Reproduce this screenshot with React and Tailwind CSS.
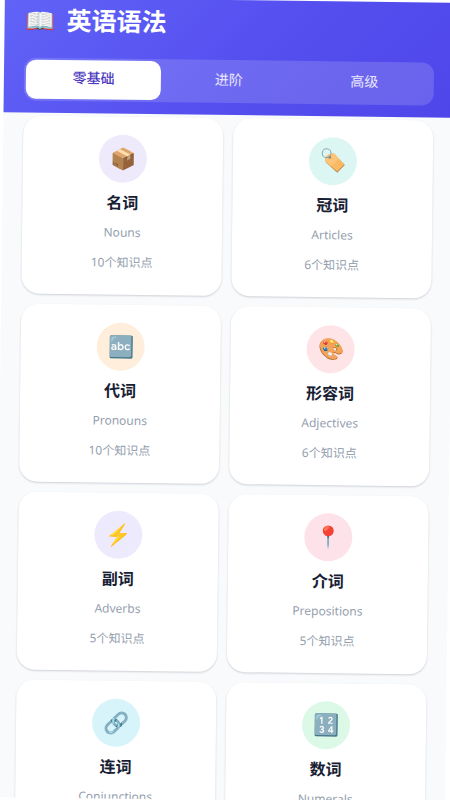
import React, { useState } from 'react';

const levels = ['零基础', '进阶', '高级'];

const TagIcon = () => (
  <svg width="26" height="26" viewBox="0 0 26 26" fill="none" aria-hidden="true">
    <path d="M5.6 10.6 8.8 7.8l5.4-1L25 17.6l-7.6 7.8L5.8 15z" fill="#b98a4e" />
    <path d="M5.4 9.8 8.6 7l5.4-1L24.2 17l-7 7.2L5.2 14z" fill="#fbb963" />
    <path d="M5.4 9.8 8.6 7l5.4-1 5 5.400-8 7.600-5.800-5z" fill="#fdc47a" />
    <circle cx="9.8" cy="10" r="1.5" fill="#94836c" />
    <circle cx="6.6" cy="6" r="4.4" stroke="#86aab5" strokeWidth="1.1" />
  </svg>
);

const topics = [
  { id: 'nouns', title: '名词', name: 'Nouns', count: 10, icon: '📦', color: 'bg-[#eeeafc]' },
  { id: 'articles', title: '冠词', name: 'Articles', count: 6, icon: <TagIcon />, color: 'bg-[#dcf7f3]' },
  { id: 'pronouns', title: '代词', name: 'Pronouns', count: 10, icon: '🔤', color: 'bg-[#feeedb]' },
  { id: 'adjectives', title: '形容词', name: 'Adjectives', count: 6, icon: '🎨', color: 'bg-[#fee4e6]' },
  { id: 'adverbs', title: '副词', name: 'Adverbs', count: 5, icon: '⚡', color: 'bg-[#eeeafe]' },
  { id: 'prepositions', title: '介词', name: 'Prepositions', count: 5, icon: '📍', color: 'bg-[#fde2e9]' },
  { id: 'conjunctions', title: '连词', name: 'Conjunctions', count: 5, icon: '🔗', color: 'bg-[#d8f4fb]' },
  { id: 'numerals', title: '数词', name: 'Numerals', count: 4, icon: '🔢', color: 'bg-[#dcf8e7]' },
];

const TopicCard = ({ topic }) => (
  <button
    type="button"
    className="flex flex-col items-center rounded-[18px] bg-white pt-[18px] pb-[22px] shadow-[0_1px_2px_rgba(15,23,42,0.18)]"
  >
    <span className={`mb-2 flex size-12 items-center justify-center rounded-full pb-0.5 text-[21px] leading-none ${topic.color}`}>
      {topic.icon}
    </span>
    <span className="mb-2 text-[16px] leading-6 font-bold text-[#172033]">{topic.title}</span>
    <span className="mb-2.5 text-[12px] leading-5 text-[#94a0ae]">{topic.name}</span>
    <span className="text-[12px] leading-5 text-[#94a0ae]">{topic.count}个知识点</span>
  </button>
);

const App = () => {
  const [active, setActive] = useState(0);

  return (
    <div className="h-screen overflow-hidden bg-white font-['Noto_Sans','Noto_Sans_CJK_SC',sans-serif]">
      <div className="flex h-full rotate-[0.7deg] flex-col bg-[#f8fafc]">
        <header className="bg-linear-135 from-[#6163f7] via-[#5650f0] to-[#4f46e9] px-5 pt-1 pb-3">
          <h1 className="mb-5 flex items-center gap-3 text-[25px] leading-9 font-bold text-white">
            <span className="text-[24px]">📖</span>
            英语语法
          </h1>
          <div className="grid grid-cols-3 rounded-xl bg-white/15 p-0.5">
            {levels.map((level, i) => (
              <button
                key={level}
                type="button"
                onClick={() => setActive(i)}
                className={`rounded-[10px] pt-2 pb-3 text-[14px] leading-[19px] ${
                  active === i ? 'bg-white font-medium text-[#4f3cc0]' : 'text-white/85'
                }`}
              >
                {level}
              </button>
            ))}
          </div>
        </header>

        <main className="grid flex-1 grid-cols-2 content-start gap-2.5 overflow-y-auto px-5 pt-[3px] pb-5 [scrollbar-width:none]">
          {topics.map((topic) => (
            <TopicCard key={topic.id} topic={topic} />
          ))}
        </main>
      </div>
    </div>
  );
};

export default App;
